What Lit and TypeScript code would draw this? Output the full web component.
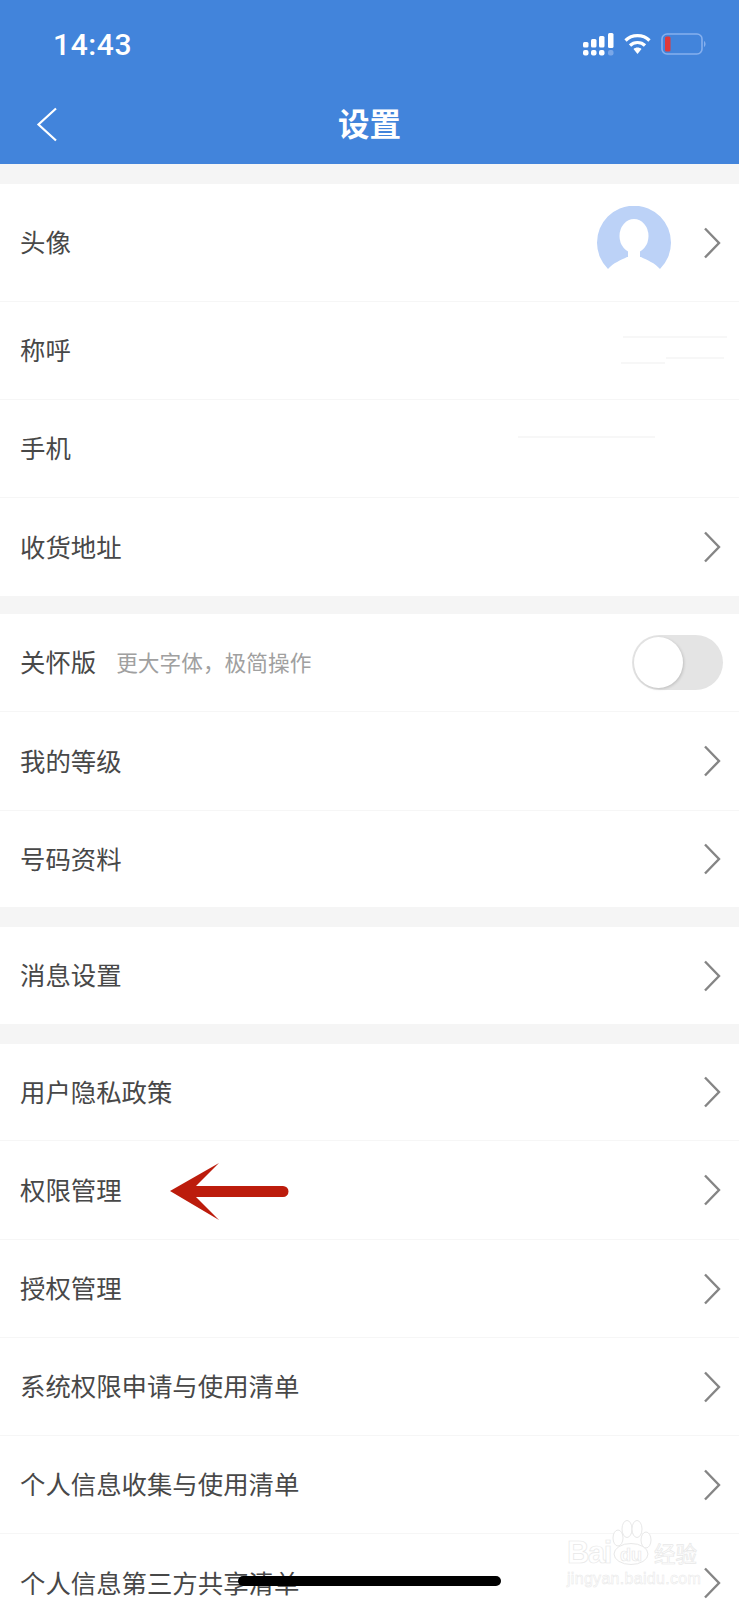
import { LitElement, html, css, svg } from "lit";
import { customElement } from "lit/decorators.js";

type Row = { label: string; h?: number; chev?: boolean; extra?: "avatar" | "name" | "phone" | "care" };

const groups: Row[][] = [
  [
    { label: "头像", h: 118, chev: true, extra: "avatar" },
    { label: "称呼", extra: "name" },
    { label: "手机", extra: "phone" },
    { label: "收货地址", chev: true },
  ],
  [
    { label: "关怀版", h: 98, extra: "care" },
    { label: "我的等级", h: 99, chev: true },
    { label: "号码资料", h: 96, chev: true },
  ],
  [{ label: "消息设置", h: 97, chev: true }],
  [
    { label: "用户隐私政策", h: 97, chev: true },
    { label: "权限管理", h: 99, chev: true },
    { label: "授权管理", chev: true },
    { label: "系统权限申请与使用清单", chev: true },
    { label: "个人信息收集与使用清单", chev: true },
    { label: "个人信息第三方共享清单", chev: true },
  ],
];

const chevron = svg`<svg class="chev" width="18" height="32" viewBox="0 0 18 32"><path d="M2 1.5 L16 16 L2 30.5" fill="none" stroke="#858585" stroke-width="2.4"/></svg>`;

@customElement("app-root")
export class AppRoot extends LitElement {
  static styles = css`
    :host {
      display: block;
      position: relative;
      width: 739px;
      height: 1600px;
      overflow: hidden;
      background: #fff;
      font-family: "Noto Sans CJK SC", "Noto Sans", sans-serif;
      color: #484848;
    }
    .header {
      height: 164px;
      background: #4284db;
      color: #fff;
      display: flex;
      flex-direction: column;
    }
    .status {
      height: 88px;
      display: flex;
      align-items: center;
      justify-content: space-between;
      padding: 0 33px 0 53px;
    }
    .time {
      font-family: Roboto, "Liberation Sans", sans-serif;
      font-size: 30px;
      font-weight: 500;
      letter-spacing: 0.6px;
    }
    .icons {
      display: flex;
      align-items: center;
      gap: 10px;
    }
    .nav {
      flex: 1;
      position: relative;
      display: flex;
      align-items: center;
      justify-content: center;
      padding-bottom: 9px;
    }
    .title {
      font-size: 31.5px;
      font-weight: 700;
      line-height: 40px;
    }
    .back {
      position: absolute;
      left: 36px;
      top: 19px;
    }
    .gap {
      height: 20px;
      background: #f5f5f5;
    }
    .gap.mid { height: 18px; }
    .row {
      box-sizing: border-box;
      position: relative;
      display: flex;
      align-items: center;
      padding: 0 18px 0 20px;
      border-bottom: 1.5px solid #f6f6f6;
    }
    .group .row:last-child { border-bottom: none; }
    .label {
      font-size: 25.4px;
      line-height: 34px;
      margin-bottom: 3px;
      white-space: nowrap;
    }
    .sub {
      font-size: 21.7px;
      color: #a0a0a0;
      margin-left: 20px;
      margin-bottom: 3px;
      white-space: nowrap;
    }
    .spacer { flex: 1; }
    .avatar { margin-right: 32px; display: block; }
    .toggle {
      position: relative;
      width: 91px;
      height: 55px;
      margin-right: -2px;
      border-radius: 28px;
      background: #e4e4e4;
    }
    .knob {
      position: absolute;
      left: 2px;
      top: 2px;
      width: 49px;
      height: 51px;
      border-radius: 50%;
      background: #fff;
      box-shadow: 1px 1px 3px rgba(0, 0, 0, 0.16);
    }
    .smudge {
      position: absolute;
      height: 1.5px;
      background: #f7f7f7;
    }
    .s1 { left: 623px; top: 34px; width: 104px; }
    .s2 { left: 666px; top: 55px; width: 58px; }
    .s3 { left: 621px; top: 60px; width: 44px; }
    .s4 { left: 518px; top: 36px; width: 137px; }
    .arrow { position: absolute; left: 168px; top: 1162px; }
    .home {
      position: absolute;
      left: 238px;
      top: 1576px;
      width: 263px;
      height: 10px;
      border-radius: 5px;
      background: #000;
    }
    .mark {
      position: absolute;
      left: 567px;
      top: 1520px;
      width: 135px;
      height: 70px;
      color: #fff;
      -webkit-text-stroke: 0.7px #e8e8e8;
      font-family: "Liberation Sans", "Noto Sans CJK SC", sans-serif;
    }
    .mark svg { position: absolute; left: 0; top: 0; }
    .bai {
      position: absolute;
      left: 0;
      top: 17px;
      font-size: 31px;
      font-weight: 700;
      line-height: 32px;
      letter-spacing: -1.5px;
    }
    .du {
      position: absolute;
      left: 53px;
      top: 25px;
      font-size: 18px;
      font-weight: 700;
      line-height: 20px;
    }
    .jy {
      position: absolute;
      left: 87px;
      top: 18px;
      font-size: 21.5px;
      line-height: 30px;
      font-family: "Noto Sans CJK SC", sans-serif;
      white-space: nowrap;
    }
    .url {
      position: absolute;
      left: 0;
      top: 50px;
      font-size: 16px;
      line-height: 18px;
      letter-spacing: 0.3px;
      -webkit-text-stroke: 0.5px #e8e8e8;
      white-space: nowrap;
    }
  `;

  private renderExtra(r: Row) {
    switch (r.extra) {
      case "avatar":
        return html`<svg class="avatar" width="74" height="74" viewBox="0 0 74 74">
          <path d="M11 63 A37 37 0 1 1 63 63 C58 57 50 54 44 51 L30 51 C24 54 16 57 11 63 Z" fill="#bcd2f7"/>
          <ellipse cx="37" cy="30" rx="14.5" ry="17" fill="#fff"/>
          <path d="M31 40h12v13H31z" fill="#fff"/>
        </svg>`;
      case "name":
        return html`<i class="smudge s1"></i><i class="smudge s2"></i><i class="smudge s3"></i>`;
      case "phone":
        return html`<i class="smudge s4"></i>`;
      case "care":
        return html`<span class="sub">更大字体，极简操作</span><span class="spacer"></span>
          <div class="toggle"><div class="knob"></div></div>`;
      default:
        return null;
    }
  }

  private renderRow(r: Row) {
    const care = r.extra === "care";
    return html`<div class="row" style="height:${r.h ?? 98}px">
      <span class="label">${r.label}</span>
      ${care ? "" : html`<span class="spacer"></span>`}
      ${this.renderExtra(r)}
      ${r.chev ? chevron : ""}
    </div>`;
  }

  render() {
    return html`
      <div class="header">
        <div class="status">
          <span class="time">14:43</span>
          <div class="icons">
            <svg width="31" height="23" viewBox="0 0 31 23" fill="#fff">
              <rect x="0" y="9" width="5.5" height="5.5" rx="1.5"/>
              <rect x="8" y="6" width="5.5" height="8.5" rx="1.5"/>
              <rect x="16" y="3" width="5.5" height="11.5" rx="1.5"/>
              <rect x="25" y="0" width="5.5" height="15" rx="1.5"/>
              <rect x="0" y="17" width="5.5" height="5.5" rx="2"/>
              <rect x="8" y="17" width="5.5" height="5.5" rx="2"/>
              <rect x="16" y="17" width="5.5" height="5.5" rx="2"/>
              <rect x="25" y="17" width="5.5" height="5.5" rx="2" fill="#7aa7e8"/>
            </svg>
            <svg width="27" height="22" viewBox="0 0 27 22" fill="none" stroke="#fff" stroke-width="3.2">
              <path d="M1.5 7.5 C8 1 19 1 25.5 7.5"/>
              <path d="M6 12.5 C10 8.5 17 8.5 21 12.5"/>
              <path d="M9.5 16 L13.5 21 L17.5 16 C15.5 14 11.5 14 9.5 16 Z" fill="#fff" stroke="none"/>
            </svg>
            <svg width="45" height="22" viewBox="0 0 45 22">
              <rect x="1" y="1" width="40" height="20" rx="5" fill="none" stroke="#86b0ee" stroke-width="1.6"/>
              <rect x="4" y="3.5" width="5.5" height="15" rx="1.5" fill="#e0393a"/>
              <path d="M43 8 C45 9 45 13 43 14 Z" fill="#86b0ee"/>
            </svg>
          </div>
        </div>
        <div class="nav">
          <svg class="back" width="22" height="35" viewBox="0 0 22 35"><path d="M20 1.5 L2.5 17.5 L20 33.5" fill="none" stroke="#fff" stroke-width="2.2"/></svg>
          <span class="title">设置</span>
        </div>
      </div>
      ${groups.map(
        (g, i) => html`<div class="gap ${i === 1 ? "mid" : ""}"></div>
          <div class="group">${g.map((r) => this.renderRow(r))}</div>`
      )}
      <svg class="arrow" width="122" height="60" viewBox="0 0 122 60">
        <path d="M2 29 L51 1 L28 24 L115 24 A5.5 5.5 0 0 1 115 35 L28 35 L51 58 Z" fill="#bc1c0c"/>
      </svg>
      <div class="mark">
        <svg width="135" height="70" viewBox="0 0 135 70" fill="#fff" stroke="#e8e8e8" stroke-width="1">
          <ellipse cx="51" cy="18" rx="5" ry="8"/>
          <ellipse cx="60" cy="9" rx="5" ry="8.5"/>
          <ellipse cx="70" cy="9" rx="5" ry="8.5"/>
          <ellipse cx="79" cy="20" rx="5" ry="8"/>
          <ellipse cx="64" cy="34" rx="17" ry="10.5"/>
        </svg>
        <span class="bai">Bai</span>
        <span class="du">du</span>
        <span class="jy">经验</span>
        <span class="url">jingyan.baidu.com</span>
      </div>
      <div class="home"></div>
    `;
  }
}
